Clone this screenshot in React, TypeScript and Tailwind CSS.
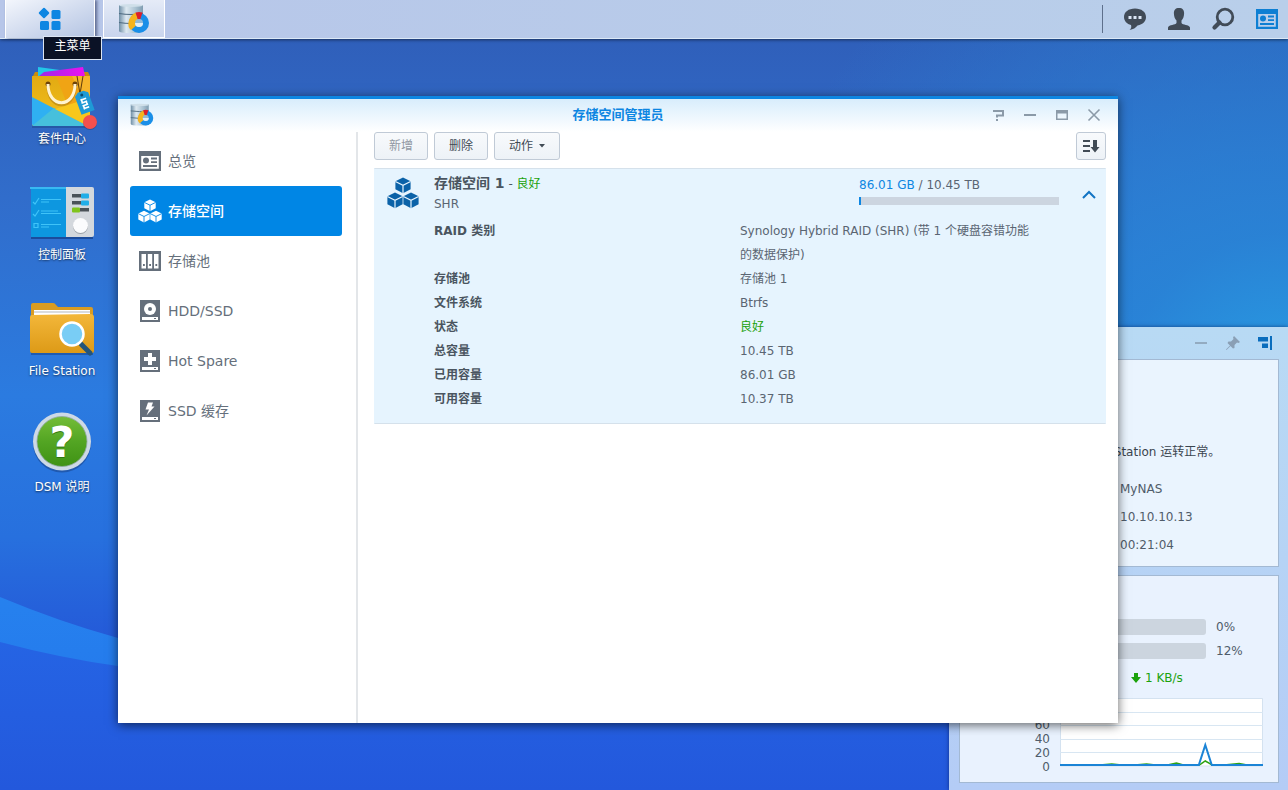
import React, { useState } from "react";

type IconProps = { className?: string };

const DatabaseIcon: React.FC<IconProps> = ({ className }) => (
  <svg viewBox="0 0 32 32" className={className} aria-hidden="true">
    <defs>
      <linearGradient id="cyl" x1="0" x2="1">
        <stop offset="0" stopColor="#6f8fa6" />
        <stop offset="0.3" stopColor="#dde9f1" />
        <stop offset="0.7" stopColor="#a9c1d1" />
        <stop offset="1" stopColor="#7f9cb0" />
      </linearGradient>
    </defs>
    <path d="M1 2 H25 V28 Q25 30 13 30 Q1 30 1 28Z" fill="url(#cyl)" />
    <ellipse cx="13" cy="2.500" rx="12" ry="1.500" fill="#cfdfe9" />
    <path d="M1 10.500 Q13 12.500 25 10.500 M1 19.500 Q13 21.500 25 19.500" stroke="#4f6b80" strokeWidth="1.200" fill="none" />
    <circle cx="21" cy="20" r="10" fill="#1a8fe8" />
    <path d="M21 20 L13 27 Q9.500 24 10.500 19 Q12 12 18 9.500Z" fill="#f6b41c" />
    <path d="M21 20 L17.500 9.500 Q21 8.500 24.500 9.500Z" fill="#dc1f2b" />
    <circle cx="21" cy="20" r="4" fill="#8fb9d8" />
    <path d="M17 20 A4 4 0 0 0 25 20Z" fill="#e2eef6" />
  </svg>
);

const CubesIcon: React.FC<IconProps & { line: string }> = ({ className, line }) => (
  <svg viewBox="0 0 32 32" className={className} aria-hidden="true">
    {[
      [16, 0],
      [8, 15],
      [24, 15],
    ].map(([x, y]) => (
      <g key={x} transform={`translate(${x} ${y})`}>
        <path d="M0 0.500 L7.600 4.300 V12.200 L0 16.200 L-7.600 12.200 V4.300Z" fill="currentColor" />
        <path d="M-7.600 4.500 L0 8.300 L7.600 4.500 M0 8.300 V16.500" stroke={line} strokeWidth="1.200" fill="none" />
      </g>
    ))}
  </svg>
);

const OverviewIcon: React.FC<IconProps> = ({ className }) => (
  <svg viewBox="0 0 24 24" className={className} fill="none" stroke="currentColor" aria-hidden="true">
    <path d="M1 2 H23 V22 H1Z M3.200 7 V19.800 H20.800 V7Z" fill="currentColor" fillRule="evenodd" stroke="none" />
    <circle cx="8" cy="11.500" r="3" fill="currentColor" stroke="none" />
    <path d="M13 9.500 H19 M13 13.200 H19 M5 17 H19" strokeWidth="1.800" />
  </svg>
);

const PoolIcon: React.FC<IconProps> = ({ className }) => (
  <svg viewBox="0 0 24 24" className={className} aria-hidden="true">
    <path d="M1 2 H23 V22 H1Z" fill="currentColor" />
    <path d="M3.500 5 H8 V19.500 H3.500Z M9.800 5 H14.200 V19.500 H9.800Z M16 5 H20.500 V19.500 H16Z" fill="#fff" />
    <path d="M5 15 H6.800 V17 H5Z M11.200 15 H13 V17 H11.200Z M17.400 15 H19.200 V17 H17.400Z" fill="currentColor" />
  </svg>
);

const DriveIcon: React.FC<IconProps & { children: React.ReactNode }> = ({ className, children }) => (
  <svg viewBox="0 0 24 24" className={className} aria-hidden="true">
    <path d="M2 1 H22 V23 H2Z" fill="currentColor" />
    <path d="M4 18 H20 V21 H4Z" fill="#fff" />
    <path d="M16 19 H18 V20 H16Z" fill="currentColor" />
    {children}
  </svg>
);

const PackageCenterIcon = () => (
  <svg viewBox="0 0 64 64" className="h-16 w-16 overflow-visible" aria-hidden="true">
    <defs>
      <linearGradient id="bag" x1="0" y1="0" x2="0" y2="1">
        <stop offset="0" stopColor="#e2aa12" />
        <stop offset="1" stopColor="#f3c11e" />
      </linearGradient>
      <linearGradient id="magenta" x1="0" x2="1">
        <stop offset="0" stopColor="#9a2be8" />
        <stop offset="1" stopColor="#ee10f0" />
      </linearGradient>
      <clipPath id="bagClip">
        <path d="M2 12 H60 V60 Q60 62 58 62 H4 Q2 62 2 60Z" />
      </clipPath>
    </defs>
    <path d="M3 12 L5 8 H58 L60 12Z" fill="#c78d0c" />
    <path d="M8 3 L30 6 L30 12 H8Z" fill="#22c7e8" />
    <path d="M9 12 L14 8 L53 3 L55 12Z" fill="url(#magenta)" />
    <path d="M2 61 H60 V64 H2Z" fill="#1c4788" opacity="0.5" />
    <g clipPath="url(#bagClip)">
      <path d="M2 12 H60 V62 H2Z" fill="url(#bag)" />
      <path d="M26 12 H60 V62 L46 62Z" fill="#f0a414" />
      <path d="M42 12 H60 V50Z" fill="#f6b52a" />
      <path d="M2 33 L58 62 H2Z" fill="#2fb0f2" />
      <path d="M2 62 L24 44 L58 62Z" fill="#46c0dc" />
      <path d="M25 45 L60 34 V62 H58Z" fill="#f8c71b" />
    </g>
    <circle cx="18" cy="20" r="2.500" fill="#6d4309" />
    <circle cx="45" cy="20" r="2.500" fill="#6d4309" />
    <path d="M18 22 C18 47 45 47 45 22" fill="none" stroke="#a87310" strokeWidth="3" opacity="0.5" />
    <path d="M18 20 C18 45 45 45 45 20" fill="none" stroke="#fff3cf" strokeWidth="3" />
    <path d="M47 12 L50 30 M53 12 L50 30" stroke="#5e3a0b" strokeWidth="1" />
    <g transform="rotate(-20 55 40)">
      <path d="M48 30 L52 27 H58 L62 30 V49 H48Z" fill="#1e9ad6" />
      <circle cx="55" cy="30.500" r="1.500" fill="#0c4a70" />
      <path d="M52 35 H58 M52 38 H58 M52 41 H58 M52 44 H58 M53 34 V38 M57 38 V41 M53 41 V45" stroke="#fff" strokeWidth="1.600" />
    </g>
    <circle cx="60" cy="59" r="7" fill="#1c3570" opacity="0.4" />
    <circle cx="60" cy="58" r="7" fill="#f4504e" />
  </svg>
);

const ControlPanelIcon = () => (
  <svg viewBox="0 0 64 64" className="h-16 w-16" aria-hidden="true">
    <path d="M1 9 H63 V59 H1Z" fill="#123d86" opacity="0.7" />
    <path d="M1 7 H36 V57 H1Z" fill="#0d97e0" />
    <path d="M0 7 H36 V9 H0Z" fill="#39b9f2" />
    <path d="M36 7 H62 Q64 7 64 9 V55 Q64 57 62 57 H36Z" fill="#d3d8dd" />
    <path
      d="M3 22 L5 24 L9 18 M3 34 L5 36 L9 30 M4 43.500 H8 V47.500 H4Z M11 19.500 H31 M11 22 H19 M11 31 H28 M11 33.500 H31 M11 44.500 H31 M11 47 H19"
      fill="none"
      stroke="#3fc3f8"
      strokeWidth="1.200"
    />
    <path d="M42 14 H51 V17.500 H42Z M42 21 H51 V24.500 H42Z M50 28 H59 V31.500 H50Z" fill="#4a5258" />
    <rect x="51" y="13.500" width="8" height="5" rx="1" fill="#21aee8" />
    <rect x="51" y="20.500" width="8" height="5" rx="1" fill="#21aee8" />
    <rect x="42" y="27.500" width="8" height="5" rx="1" fill="#7fc41c" />
    <circle cx="50.500" cy="46.500" r="7.500" fill="#9aa1a8" />
    <circle cx="50.500" cy="45.500" r="7.500" fill="#fbfcfd" />
  </svg>
);

const FileStationIcon = () => (
  <svg viewBox="0 0 64 64" className="h-16 w-16" aria-hidden="true">
    <defs>
      <linearGradient id="folder" x1="0" y1="0" x2="0" y2="1">
        <stop offset="0" stopColor="#f3b73a" />
        <stop offset="1" stopColor="#dd9a17" />
      </linearGradient>
    </defs>
    <path d="M1 56 H63 V59 H1Z" fill="#123d86" opacity="0.5" />
    <path d="M1 18 V9 Q1 7 3 7 H23 Q25 7 26 9 L28 11 H61 Q63 11 63 13 V20 H1Z" fill="#d99c22" />
    <path d="M4 14 H60 V20 H4Z" fill="#fff" />
    <path d="M4 16 H60" stroke="#b3b7bb" strokeWidth="1" />
    <path d="M0 21 Q0 19 2 19 L60 18 Q64 18 64 21 V55 Q64 57 62 57 H2 Q0 57 0 55Z" fill="url(#folder)" />
    <path d="M51 48 L60 57" stroke="#24557a" strokeWidth="5" strokeLinecap="round" />
    <circle cx="42" cy="38" r="11.500" fill="#79cdf5" stroke="#fff" strokeWidth="2.500" />
  </svg>
);

const HelpIcon = () => (
  <svg viewBox="0 0 64 64" className="h-16 w-16" aria-hidden="true">
    <defs>
      <linearGradient id="green" x1="0" y1="0" x2="0" y2="1">
        <stop offset="0" stopColor="#74bd37" />
        <stop offset="0.5" stopColor="#53a523" />
        <stop offset="1" stopColor="#3f9214" />
      </linearGradient>
    </defs>
    <circle cx="32" cy="31.500" r="29" fill="#173e80" opacity="0.5" />
    <circle cx="32" cy="29.500" r="29" fill="#cdd9e6" />
    <circle cx="32" cy="29.500" r="25" fill="url(#green)" stroke="#8fa9a0" strokeWidth="0.800" />
    <text x="32" y="46" textAnchor="middle" fontSize="43" fontWeight="bold" fill="#2f7410">
      ?
    </text>
    <text x="32" y="45" textAnchor="middle" fontSize="43" fontWeight="bold" fill="#fff">
      ?
    </text>
  </svg>
);

const desktopItems = [
  { label: "套件中心", icon: <PackageCenterIcon /> },
  { label: "控制面板", icon: <ControlPanelIcon /> },
  { label: "File Station", icon: <FileStationIcon /> },
  { label: "DSM 说明", icon: <HelpIcon /> },
];

const iconSize = "h-6 w-6 shrink-0";

const navItems = [
  { label: "总览", icon: <OverviewIcon className={iconSize} /> },
  { label: "存储空间", icon: <CubesIcon className={iconSize} line="#0086e5" /> },
  { label: "存储池", icon: <PoolIcon className={iconSize} /> },
  {
    label: "HDD/SSD",
    icon: (
      <DriveIcon className={iconSize}>
        <circle cx="12" cy="10" r="6" fill="#fff" />
        <circle cx="12" cy="10" r="2" fill="currentColor" />
      </DriveIcon>
    ),
  },
  {
    label: "Hot Spare",
    icon: (
      <DriveIcon className={iconSize}>
        <path d="M10 4 H14 V8 H18 V12 H14 V16 H10 V12 H6 V8 H10Z" fill="#fff" />
      </DriveIcon>
    ),
  },
  {
    label: "SSD 缓存",
    icon: (
      <DriveIcon className={iconSize}>
        <path d="M10 3.500 H15 L13.500 7.500 H16.500 L8.500 16.500 L11 10.500 H7.500Z" fill="#fff" />
      </DriveIcon>
    ),
  },
];

const details = [
  { name: "RAID 类别", value: "Synology Hybrid RAID (SHR) (带 1 个硬盘容错功能的数据保护)" },
  { name: "存储池", value: "存储池 1" },
  { name: "文件系统", value: "Btrfs" },
  { name: "状态", value: "良好", ok: true },
  { name: "总容量", value: "10.45 TB" },
  { name: "已用容量", value: "86.01 GB" },
  { name: "可用容量", value: "10.37 TB" },
];

const Wallpaper = () => (
  <svg
    viewBox="0 0 1288 790"
    preserveAspectRatio="none"
    className="absolute inset-0 h-full w-full"
    aria-hidden="true"
  >
    <defs>
      <linearGradient id="sky" x1="0" y1="0" x2="0" y2="1">
        <stop offset="0" stopColor="#2f5cb6" />
        <stop offset="0.250" stopColor="#316dcb" />
        <stop offset="0.500" stopColor="#2b7be0" />
        <stop offset="0.680" stopColor="#2770de" />
        <stop offset="0.820" stopColor="#2458d8" />
        <stop offset="1" stopColor="#2459de" />
      </linearGradient>
      <radialGradient id="glow" cx="1288" cy="400" r="560" gradientUnits="userSpaceOnUse">
        <stop offset="0" stopColor="#28a0e4" />
        <stop offset="0.300" stopColor="#2886d6" stopOpacity="0.800" />
        <stop offset="1" stopColor="#2886d6" stopOpacity="0" />
      </radialGradient>
      <linearGradient id="wave" x1="0" y1="0" x2="0" y2="1">
        <stop offset="0" stopColor="#2784ef" />
        <stop offset="1" stopColor="#2272ea" />
      </linearGradient>
      <linearGradient id="sea" x1="0" y1="0" x2="0" y2="1">
        <stop offset="0" stopColor="#2564e4" />
        <stop offset="1" stopColor="#2358dc" />
      </linearGradient>
    </defs>
    <path d="M0 0 H1288 V790 H0Z" fill="url(#sky)" />
    <path d="M0 0 H1288 V790 H0Z" fill="url(#glow)" />
    <path d="M0 597 Q60 622 118 638 Q500 740 1288 560 V790 H0Z" fill="url(#wave)" />
    <path d="M0 642 Q60 658 118 666 Q500 720 1288 640 V790 H0Z" fill="url(#sea)" />
  </svg>
);

const Taskbar = () => (
  <header className="relative flex h-[39px] shrink-0 items-stretch border-b border-[#dbe8f6] bg-linear-to-r from-[#b7c6e9] to-[#b9cfea] pl-[5px] shadow-[0_1px_3px_rgba(0,0,0,0.5)]">
    <div className="relative">
      <button
        aria-label="主菜单"
        className="flex h-full w-[90px] items-center justify-center border-x border-white bg-linear-to-br from-[#f3f6fc] to-[#b3c3e2] shadow-[2px_0_3px_rgba(30,40,80,0.6)]"
      >
        <svg viewBox="0 0 24 24" className="h-6 w-6" fill="#0d86e2" aria-hidden="true">
          <rect x="2" y="2" width="8" height="8" rx="1" transform="rotate(45 6 6)" />
          <rect x="13.500" y="3" width="9" height="9" rx="1.500" />
          <rect x="2" y="14" width="9" height="9" rx="1.500" />
          <rect x="13.500" y="14" width="9" height="9" rx="1.500" />
        </svg>
      </button>
      <div
        role="tooltip"
        className="absolute top-9 left-[38px] z-20 flex h-6 w-[59px] items-center justify-center border border-[#dce5f3] bg-[#0b1226] pb-1 text-xs whitespace-nowrap text-white"
      >
        主菜单
      </div>
    </div>
    <button
      aria-label="存储空间管理员"
      className="ml-2 flex w-[62px] items-center justify-center border border-t-0 border-white bg-linear-to-b from-[#e5ebf7] to-[#c9d5ed]"
    >
      <DatabaseIcon className="h-8 w-8" />
    </button>
    <nav className="ml-auto flex items-center text-[#414b57]">
      <span className="mr-5 h-7 w-px bg-[#5e708c]" />
      <div className="flex items-center gap-5 pr-[9px]">
        <button aria-label="聊天">
          <svg viewBox="0 0 24 24" className="h-6 w-6" aria-hidden="true">
            <path d="M12 1.500 C5.500 1.500 1 5 1 10 C1 14 4 17 8 18 Q9 21 6.500 23 Q12 22 14.500 18.500 C20 17.500 23 14 23 10 C23 5 18.500 1.500 12 1.500Z" fill="currentColor" />
            <path d="M5.500 9 H8.500 V12 H5.500Z M10.500 9 H13.500 V12 H10.500Z M15.500 9 H18.500 V12 H15.500Z" fill="#dbe6f5" />
          </svg>
        </button>
        <button aria-label="用户">
          <svg viewBox="0 0 24 24" className="h-6 w-6" fill="currentColor" aria-hidden="true">
            <path d="M12 1 C8.500 1 6.700 3 6.900 6.500 C7 10 8 12 9.500 13.500 V16 C8.500 18 2 17.500 1 20.500 V23 H23 V20.500 C22 17.500 15.500 18 14.500 16 V13.500 C16 12 17 10 17.100 6.500 C17.300 3 15.500 1 12 1Z" />
          </svg>
        </button>
        <button aria-label="搜索">
          <svg viewBox="0 0 24 24" className="h-6 w-6" fill="none" stroke="currentColor" aria-hidden="true">
            <circle cx="14" cy="10" r="7.800" strokeWidth="2.800" />
            <path d="M8.500 15.500 L3.500 20.500" strokeWidth="4.200" strokeLinecap="round" />
          </svg>
        </button>
        <button aria-label="小工具" className="text-[#0d7fd3]">
          <OverviewIcon className="h-6 w-6" />
        </button>
      </div>
    </nav>
  </header>
);

const toolButton =
  "flex h-7 items-center justify-center rounded-[3px] border border-[#c0cad6] bg-linear-to-b from-[#f8fafc] to-[#edf2f7] text-xs";

const StorageWindow = () => {
  const [active, setActive] = useState("存储空间");
  const [open, setOpen] = useState(true);

  return (
    <section className="absolute top-[57px] right-[170px] bottom-[67px] left-[118px] z-10 flex flex-col border-t-[3px] border-[#0d86e2] bg-white shadow-[0_2px_10px_rgba(0,0,0,0.6)]">
      <div className="grid h-[33px] shrink-0 grid-cols-[1fr_auto_1fr] items-center bg-linear-to-b from-[#d8edfc] to-white px-2 pb-px">
        <DatabaseIcon className="ml-1 h-6 w-6" />
        <h1 className="text-[13px] font-bold text-[#0d86e2]">存储空间管理员</h1>
        <div className="flex justify-end text-[#8b9aa8]">
          <button aria-label="帮助" className="flex w-8 justify-center">
            <svg viewBox="0 0 16 16" className="h-4 w-4" fill="none" stroke="currentColor" strokeWidth="2" aria-hidden="true">
              <path d="M3 4 H13 V8.500 H7 V10.500 M7 12 V14" />
            </svg>
          </button>
          <button aria-label="最小化" className="flex w-8 justify-center">
            <svg viewBox="0 0 16 16" className="h-4 w-4" stroke="currentColor" strokeWidth="2" aria-hidden="true">
              <path d="M2 8 H14" />
            </svg>
          </button>
          <button aria-label="最大化" className="flex w-8 justify-center">
            <svg viewBox="0 0 16 16" className="h-4 w-4" fill="currentColor" aria-hidden="true">
              <path d="M2 3 H14 V13 H2Z M3.500 6.500 V11.500 H12.500 V6.500Z" fillRule="evenodd" />
            </svg>
          </button>
          <button aria-label="关闭" className="flex w-8 justify-center">
            <svg viewBox="0 0 16 16" className="h-4 w-4" stroke="currentColor" strokeWidth="1.600" aria-hidden="true">
              <path d="M2.500 2.500 L13.500 13.500 M13.500 2.500 L2.500 13.500" />
            </svg>
          </button>
        </div>
      </div>

      <div className="flex min-h-0 flex-1">
        {/* sidebar */}
        <nav className="w-60 shrink-0 border-r-2 border-[#e3e6e9] pt-1 pr-3.5 pl-3">
          {navItems.map((item) => (
            <button
              key={item.label}
              onClick={() => setActive(item.label)}
              className={
                item.label === active
                  ? "flex h-[50px] w-full items-center gap-1.5 rounded-[3px] bg-[#0086e5] pl-2 text-sm font-medium text-white"
                  : "flex h-[50px] w-full items-center gap-1.5 rounded-[3px] pl-2 text-sm text-[#656f7b]"
              }
            >
              {item.icon}
              {item.label}
            </button>
          ))}
        </nav>

        <main className="min-w-0 flex-1 pr-3 pl-4">
          <div className="flex items-center gap-1.5">
            <button disabled className={toolButton + " w-[54px] text-[#9098a3]"}>新增</button>
            <button className={toolButton + " w-[54px] text-[#414b55]"}>删除</button>
            <button className={toolButton + " w-[66px] gap-1.5 text-[#414b55]"}>
              动作
              <svg viewBox="0 0 6 4" className="h-1 w-1.5" fill="currentColor" aria-hidden="true">
                <path d="M0 0 H6 L3 3.500Z" />
              </svg>
            </button>
            <button aria-label="排序" className={toolButton + " ml-auto w-[30px] text-[#414b55]"}>
              <svg viewBox="0 0 18 16" className="h-4 w-[18px]" fill="currentColor" aria-hidden="true">
                <path d="M1 2 H8 V4 H1Z M1 7 H8 V9 H1Z M1 12 H8 V14 H1Z M11 2 H15 V9 H17.500 L13 14.500 L8.500 9 H11Z" />
              </svg>
            </button>
          </div>

          <article className="mt-2 border border-[#d5e1eb] border-x-[#e6f4fe] bg-[#e6f4fe] pb-3 text-xs text-[#5a6572]">
            <div className="flex items-start pt-1 pl-3">
              <CubesIcon className="mt-1 mr-[15px] h-8 w-8 shrink-0 text-[#0b62a8]" line="#e6f4fe" />
              <div>
                <h2 className="text-[#4a5560]">
                  <span className="text-sm leading-[21px] font-bold">存储空间 1</span> -{" "}
                  <span className="text-[#1ba20c]">良好</span>
                </h2>
                <p className="leading-5">SHR</p>
              </div>
              <div className="mt-0.5 ml-auto w-[200px]">
                <p className="leading-5">
                  <span className="text-[#0d86e2]">86.01 GB</span> / 10.45 TB
                </p>
                <div className="mt-0.5 h-2 bg-[#ccd5e0]">
                  <div className="h-full w-0.5 bg-[#0d86e2]" />
                </div>
              </div>
              <button
                aria-label="展开或收起"
                aria-expanded={open}
                onClick={() => setOpen(!open)}
                className="mt-4 mr-2 ml-[22px] flex w-4 justify-center text-[#1274c4]"
              >
                <svg viewBox="0 0 16 12" className="h-3 w-4" fill="none" stroke="currentColor" strokeWidth="2" aria-hidden="true">
                  <path d="M2 9 L8 3 L14 9" />
                </svg>
              </button>
            </div>
            {open && (
              <dl className="mt-[5px] px-[59px]">
                {details.map((row) => (
                  <div key={row.name} className="grid grid-cols-2 leading-6">
                    <dt className="font-bold text-[#4a5560]">{row.name}</dt>
                    <dd className={row.ok ? "pr-2 text-[#1ba20c]" : "pr-2"}>{row.value}</dd>
                  </div>
                ))}
              </dl>
            )}
          </article>
        </main>
      </div>
    </section>
  );
};

const Widgets = () => (
  <aside className="absolute right-0 bottom-0 w-[339px] bg-linear-to-b from-[#b8daf4] to-[#b4ccf6] pr-[9px] pb-[7px] pl-2.5 text-xs text-[#505c6a] shadow-[0_0_4px_rgba(0,20,80,0.6)]">
    <div className="flex h-8 items-center justify-end gap-4 pr-1.5">
      <button aria-label="最小化" className="text-[#8a9fb5]">
        <svg viewBox="0 0 16 16" className="h-4 w-4" stroke="currentColor" strokeWidth="1.600" aria-hidden="true">
          <path d="M2 8 H14" />
        </svg>
      </button>
      <button aria-label="固定" className="text-[#8a9fb5]">
        <svg viewBox="0 0 16 16" className="h-4 w-4" fill="currentColor" aria-hidden="true">
          <path d="M9 1 L15 7 L13.500 8 L12 7.500 L9.500 10 L9.500 13 L8 13.500 L5.500 11 L1.500 15 L1 14.500 L5 10.500 L2.500 8 L3.500 6.500 L6 6.500 L8.500 4 L8 2.500Z" />
        </svg>
      </button>
      <button aria-label="停靠" className="text-[#0a6dbd]">
        <svg viewBox="0 0 16 16" className="h-4 w-4" fill="currentColor" aria-hidden="true">
          <path d="M1 2 H11 V6.500 H1Z M5 8.500 H11 V13 H5Z M13 1 H15 V15 H13Z" />
        </svg>
      </button>
    </div>

    <div className="h-[208px] border border-[#a3b9d3] bg-[#eaf4fe] pt-[84px] pl-[128px]">
      <p className="text-[#3a444f]">DiskStation 运转正常。</p>
      <div className="mt-[15px] pl-8 leading-7">
        <p>MyNAS</p>
        <p>10.10.10.13</p>
        <p>00:21:04</p>
      </div>
    </div>

    <div className="mt-2 h-[208px] border border-[#a3b9d3] bg-[#e9f2fe] pt-[39px]">
      {["0%", "12%"].map((value) => (
        <div key={value} className="flex h-6 items-center gap-2.5 pl-[100px]">
          <div className="h-4 w-[146px] rounded-[3px] bg-[#ccd5df]" />
          <span>{value}</span>
        </div>
      ))}
      <p className="mt-1.5 flex items-center gap-1 pl-[171px] leading-[18px] text-[#1ba20c]">
        <svg viewBox="0 0 10 10" className="h-2.5 w-2.5" fill="currentColor" aria-hidden="true">
          <path d="M3 0 H7 V4 H10 L5 10 L0 4 H3Z" />
        </svg>
        1 KB/s
      </p>
      <div className="mt-[11px] flex pr-[15px]">
        <ul className="w-[90px] pt-[6px] text-right leading-[14px]">
          <li>80</li>
          <li>60</li>
          <li>40</li>
          <li>20</li>
          <li>0</li>
        </ul>
        <svg viewBox="0 0 204 69" preserveAspectRatio="none" className="ml-2.5 h-[69px] min-w-0 flex-1" aria-hidden="true">
          <path d="M0.500 0.500 H203.500 V68 H0.500Z" fill="#fff" stroke="#d4e2f0" />
          <path d="M0 14.500 H204 M0 27.500 H204 M0 41.500 H204 M0 54.500 H204" stroke="#d8e6f2" />
          <path d="M0 67 H40 L52 66 L62 67 H75 L87 66 L96 67 H108 L117 65 L124 67 H140 L146 63 L153 67 H165 L180 65.500 L188 67 H204" fill="none" stroke="#2da312" strokeWidth="1.500" />
          <path d="M0 67 H139.500 L146 47 L152.500 67 H204" fill="none" stroke="#1b84d6" strokeWidth="2" />
        </svg>
      </div>
    </div>
  </aside>
);

export default function App() {
  return (
    <div className="relative flex h-screen flex-col overflow-hidden bg-[#2459de] font-['DejaVu_Sans','Noto_Sans_CJK_SC',sans-serif]">
      <Wallpaper />
      <div className="relative z-20">
        <Taskbar />
      </div>
      <div className="relative min-h-0 flex-1">
        <div className="flex w-[124px] flex-col gap-8 pt-[25px]">
          {desktopItems.map((item) => (
            <button key={item.label} className="flex flex-col items-center gap-0.5">
              {item.icon}
              <span className="text-xs leading-[18px] whitespace-nowrap text-white [text-shadow:0_1px_2px_rgba(0,0,0,0.6)]">
                {item.label}
              </span>
            </button>
          ))}
        </div>
        <Widgets />
        <StorageWindow />
      </div>
    </div>
  );
}
